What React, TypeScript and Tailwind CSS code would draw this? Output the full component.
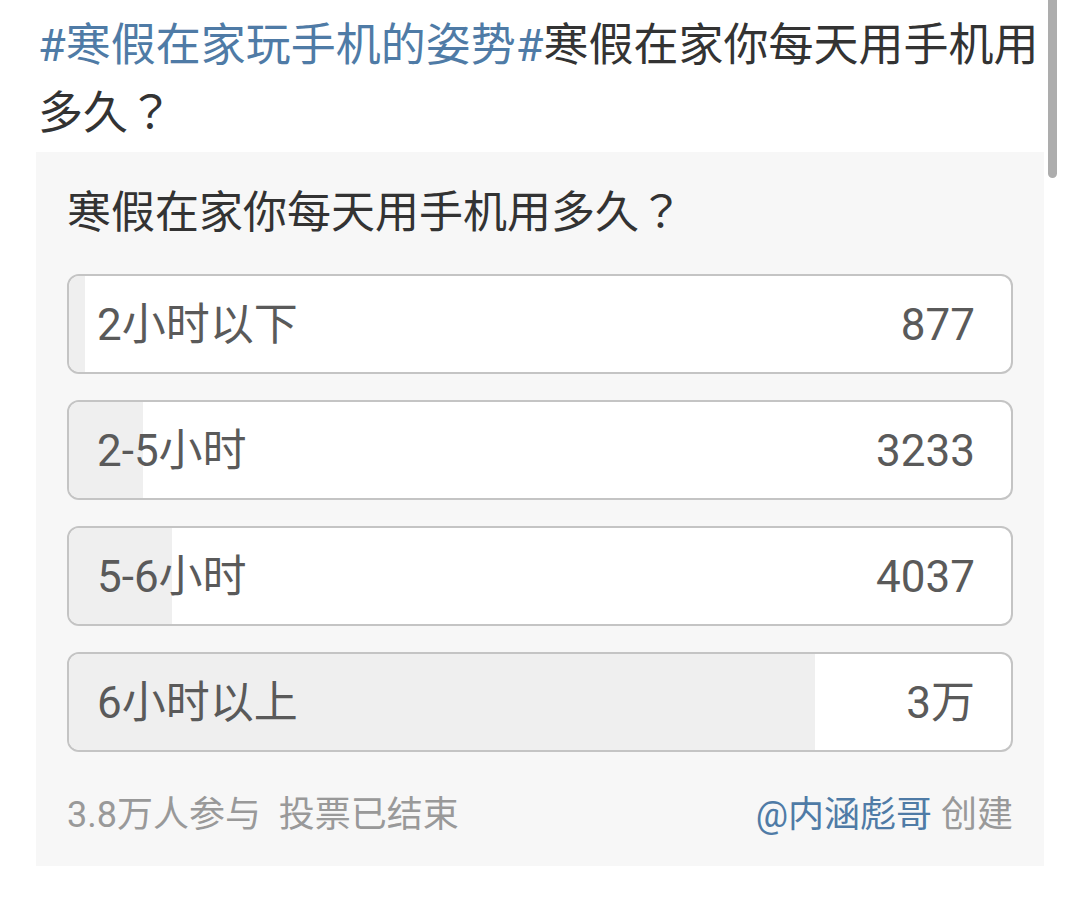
const options = [
  { label: "2小时以下", count: "877", fill: 16 },
  { label: "2-5小时", count: "3233", fill: 74 },
  { label: "5-6小时", count: "4037", fill: 103 },
  { label: "6小时以上", count: "3万", fill: 746 },
];

const qmark = (
  <span className="leading-none" style={{ fontFamily: '"Noto Sans CJK JP", sans-serif' }}>
    ？
  </span>
);

export default function App() {
  return (
    <div
      className="relative min-h-[921px] w-[1080px] bg-white"
      style={{ fontFamily: 'Roboto, "Noto Sans CJK SC", sans-serif' }}
    >
      {/* scrollbar */}
      <div className="absolute right-[23px] top-0 h-[178px] w-[9px] rounded-b-full bg-[#adadad]" />

      <p className="pl-[38px] pr-[36px] pt-[12px] text-[45px] leading-[68px] text-[#333]">
        <span className="text-[#4f7ba6]">#寒假在家玩手机的姿势#</span>寒假在家你每天用手机用多久{qmark}
      </p>

      <div className="ml-[36px] mt-[4px] w-[1008px] bg-[#f7f7f7] px-[31px] pb-[26px] pt-[31px]">
        <div className="mb-[31px] text-[44px] leading-[60px] text-[#333]">
          寒假在家你每天用手机用多久{qmark}
        </div>

        <div className="flex flex-col gap-[26px]">
          {options.map((o) => (
            <div
              key={o.label}
              className="relative flex h-[100px] items-center justify-between overflow-hidden rounded-[12px] border-2 border-[#c4c4c4] bg-white pl-[28px] pr-[36px] pt-[2px] text-[44px] text-[#5a5a5a]"
            >
              <div
                className="absolute inset-y-0 left-0 bg-[#efefef]"
                style={{ width: o.fill }}
              />
              <span className="relative">{o.label}</span>
              <span className="relative">{o.count}</span>
            </div>
          ))}
        </div>

        <div className="mt-[38px] flex items-center justify-between text-[36px] leading-[50px] text-[#999]">
          <span>3.8万人参与&nbsp;&nbsp;投票已结束</span>
          <span>
            <span className="text-[#4f7ba6]">@内涵彪哥</span> 创建
          </span>
        </div>
      </div>
    </div>
  );
}
